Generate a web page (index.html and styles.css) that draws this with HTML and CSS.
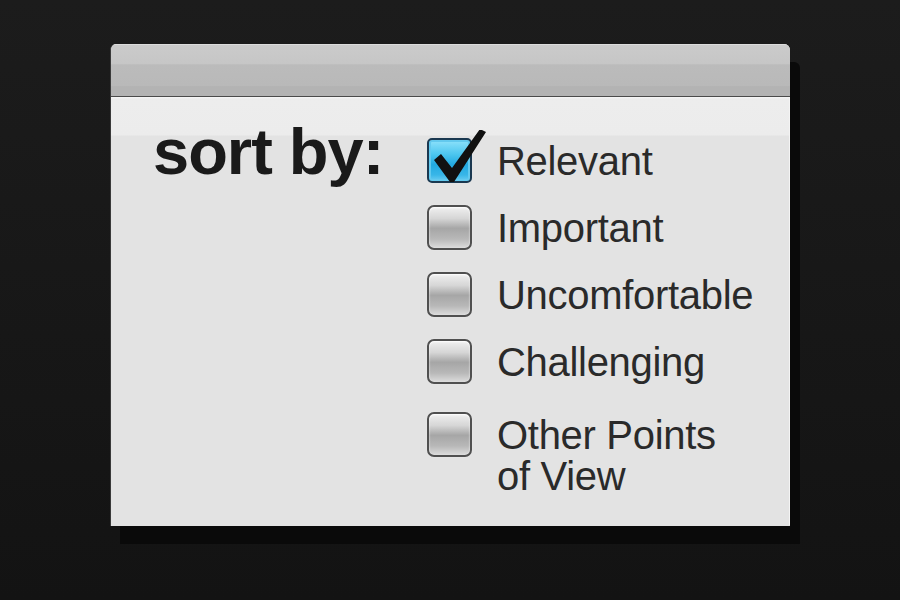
FILE: index.html
```html
<!DOCTYPE html>
<html lang="en">
<head>
    <meta charset="UTF-8">
    <title>Sort by</title>
    <link rel="stylesheet" href="styles.css">
</head>
<body>
    <div class="window">
        <div class="titlebar"></div>
        <div class="content">
            <div class="heading">sort by:</div>
            <ul class="options">
                <li class="option">
                    <span class="box checked">
                        <svg class="tick" width="60" height="60" viewBox="0 0 60 60">
                            <path d="M4 30 L11 24 L22 38 L50 -1 L56 2 L24 52 L20 52 Z" fill="#111"/>
                        </svg>
                    </span>
                    <span class="label">Relevant</span>
                </li>
                <li class="option">
                    <span class="box"></span>
                    <span class="label">Important</span>
                </li>
                <li class="option">
                    <span class="box"></span>
                    <span class="label">Uncomfortable</span>
                </li>
                <li class="option">
                    <span class="box"></span>
                    <span class="label">Challenging</span>
                </li>
                <li class="option last">
                    <span class="box"></span>
                    <span class="label">Other Points<br>of View</span>
                </li>
            </ul>
        </div>
    </div>
</body>
</html>
```

FILE: styles.css
```css
/* reset */
* {
    margin: 0;
    padding: 0;
    box-sizing: border-box;
}
body {
    width: 900px;
    height: 600px;
    overflow: hidden;
    background: linear-gradient(#1c1c1c, #131313);
    font-family: 'Liberation Sans', Arial, sans-serif;
    padding: 44px 0 0 110px;
}

/* window */
.window {
    width: 680px;
    height: 482px;
    border-radius: 6px 6px 0 0;
    background: #e3e3e3;
    box-shadow: 10px 18px 0 #0a0a0a;
    border-left: 1px solid #3a3a3a;
    overflow: hidden;
}
.titlebar {
    height: 53px;
    background: linear-gradient(#cbcbcb 0, #c6c6c6 38%, #bbbbbb 40%, #b9b9b9 80%, #b3b3b3 82%, #b3b3b3 100%);
    border-bottom: 1px solid #4a4a4a;
    box-shadow: inset 0 1px 0 #dcdcdc;
}
.content {
    display: flex;
    align-items: flex-start;
    height: 428px;
    padding: 0 0 0 42px;
    background: linear-gradient(#f6f6f6 0, #ededed 2px, #ececec 38px, #e3e3e3 39px, #e3e3e3 100%);
    border-right: 1px solid #f4f4f4;
}
.heading {
    width: 274px;
    margin-top: 22px;
    font-size: 65px;
    line-height: 65px;
    font-weight: bold;
    letter-spacing: -1px;
    color: #1a1a1a;
}

/* options */
.options {
    list-style: none;
    margin-top: 44px;
    display: flex;
    flex-direction: column;
    gap: 25px;
}
.option {
    display: flex;
    align-items: flex-start;
    gap: 25px;
}
.option.last {
    margin-top: 6px;
}
.label {
    font-size: 40px;
    line-height: 41px;
    letter-spacing: -0.3px;
    color: #2a2a2a;
}
.box {
    position: relative;
    flex: none;
    width: 45px;
    height: 45px;
    margin-top: -3px;
    border: 2px solid #505050;
    border-radius: 7px;
    background: linear-gradient(#f0f0f0 0, #d6d6d6 28%, #a6a6a6 52%, #b8b8b8 78%, #dcdcdc 100%);
    box-shadow: inset 0 1px 2px #fff, 0 0 1px #fff;
}
.box.checked {
    border-color: #1a3850;
    border-radius: 5px;
    background: linear-gradient(#8fe2fb 0, #4cc6ef 35%, #22a9e0 60%, #38b6e8 85%, #6acdf2 100%);
    box-shadow: inset 0 0 0 2px #63c9ee;
}
.tick {
    position: absolute;
    left: 1px;
    top: -10px;
}
```
